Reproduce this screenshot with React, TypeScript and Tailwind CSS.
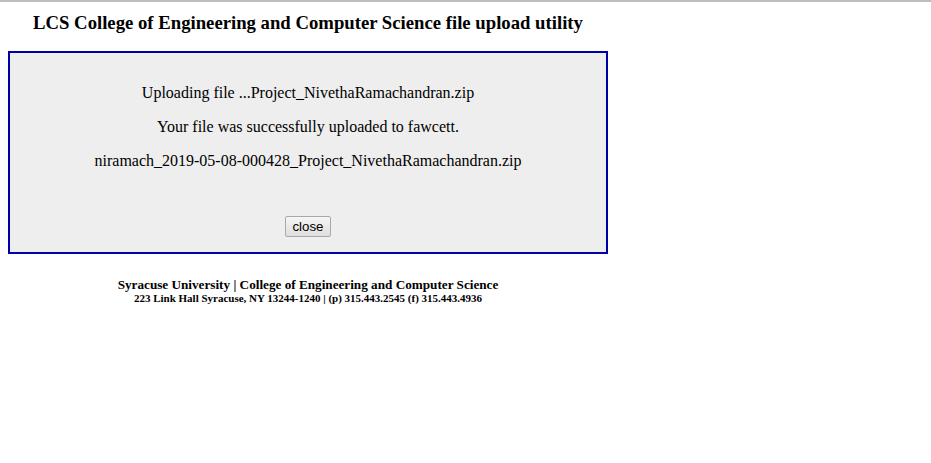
export default function App() {
  return (
    <div className="min-h-[463px] bg-white border-t-2 border-[#bdbdbd] font-['Liberation_Serif',serif] text-black">
      <div className="w-[600px] ml-2">
        <h3 className="pt-[10px] text-center text-[18.72px] font-bold leading-[22px]">
          LCS College of Engineering and Computer Science file upload utility
        </h3>
        <div className="mt-[17px] h-[203px] border-2 border-[#0000a8] bg-[#eeeeee] flex flex-col items-center pt-[31px] text-[16px] leading-[18px]">
          <p>Uploading file ...Project_NivethaRamachandran.zip</p>
          <p className="mt-[16px]">Your file was successfully uploaded to fawcett.</p>
          <p className="mt-[16px]">niramach_2019-05-08-000428_Project_NivethaRamachandran.zip</p>
          <button className="mt-[46px] h-[21px] px-[6px] border border-[#a9a9a9] rounded-[2px] bg-gradient-to-b from-[#f6f6f6] to-[#dedede] font-['Liberation_Sans',sans-serif] text-[13.3px] leading-[15px]">
            close
          </button>
        </div>
        <div className="mt-[23px] text-center font-bold">
          <div className="text-[13.2px] leading-[15px]">
            Syracuse University | College of Engineering and Computer Science
          </div>
          <div className="text-[11px] leading-[13px]">
            223 Link Hall Syracuse, NY 13244-1240 | (p) 315.443.2545 (f) 315.443.4936
          </div>
        </div>
      </div>
    </div>
  );
}
